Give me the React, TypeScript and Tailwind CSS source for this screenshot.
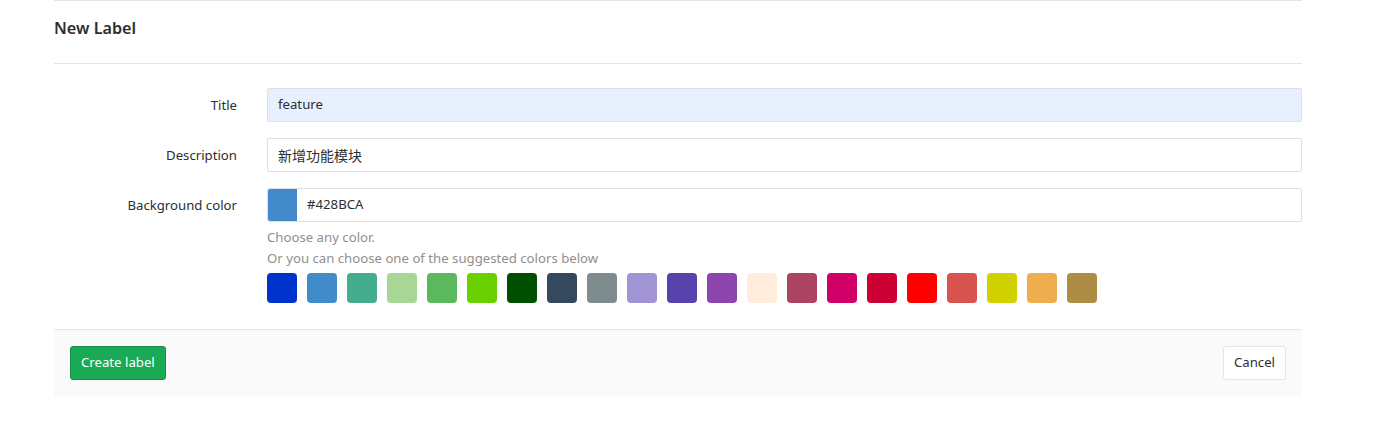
const SWATCHES = [
  "#0033CC", "#428BCA", "#44AD8E", "#A8D695", "#5CB85C", "#69D100", "#004E00",
  "#34495E", "#7F8C8D", "#A295D6", "#5843AD", "#8E44AD", "#FFECDB", "#AD4363",
  "#D10069", "#CC0033", "#FF0000", "#D9534F", "#D1D100", "#F0AD4E", "#AD8D43",
];

function Row({ label, children }: { label: string; children: React.ReactNode }) {
  return (
    <div className="flex">
      <label className="w-[198px] shrink-0 pr-[15px] pt-[7px] text-right text-[13.2px] leading-5 text-[#2e2e2e]">
        {label}
      </label>
      <div className="flex-1 pl-[15px]">{children}</div>
    </div>
  );
}

export default function App() {
  return (
    <div
      className="min-h-[433px] bg-white px-[54px] pr-[71px] text-[#2e2e2e]"
      style={{ fontFamily: '"Noto Sans", "Noto Sans CJK SC", sans-serif' }}
    >
      <div className="border-t border-[#e5e5e5]">
        <h3 className="flex h-[62px] items-center pb-[8px] text-[16.2px] font-semibold text-[#2e2e2e]">New Label</h3>
      </div>
      <div className="border-t border-[#e5e5e5] pt-6">
        <div className="flex flex-col gap-4">
          <Row label="Title">
            <div className="flex h-[34px] items-center rounded-[2px] border border-[#dfdfdf] bg-[#e8f0fe] px-[10px] text-[13.2px]">
              feature
            </div>
          </Row>
          <Row label="Description">
            <div className="flex h-[34px] items-center rounded-[2px] border border-[#dfdfdf] bg-white px-[10px] text-[14px]">
              新增功能模块
            </div>
          </Row>
          <Row label="Background color">
            <div className="flex h-[34px] items-stretch rounded-[2px] border border-[#dfdfdf] bg-white text-[13.2px]">
              <div className="w-[29px] rounded-l-[2px] bg-[#428BCA]" />
              <div className="flex items-center pl-[10px]">#428BCA</div>
            </div>
            <div className="mt-[5px] text-[13.2px] leading-[21px] text-[#8f8f8f]">
              <p>Choose any color.</p>
              <p>Or you can choose one of the suggested colors below</p>
            </div>
            <div className="mt-[4px] flex gap-[10px]">
              {SWATCHES.map((c) => (
                <span key={c} className="h-[30px] w-[30px] rounded-[4px]" style={{ backgroundColor: c }} />
              ))}
            </div>
          </Row>
        </div>
        <div className="mt-[26px] flex items-center justify-between border-t border-[#e5e5e5] bg-[#fafafa] px-4 pb-4 pt-4">
          <button className="h-[34px] rounded-[3px] border border-[#168f48] bg-[#1aaa55] px-[10px] text-[13.2px] text-white">
            Create label
          </button>
          <button className="h-[34px] rounded-[3px] border border-[#e5e5e5] bg-white px-[10px] text-[13.2px] text-[#2e2e2e]">
            Cancel
          </button>
        </div>
      </div>
    </div>
  );
}
